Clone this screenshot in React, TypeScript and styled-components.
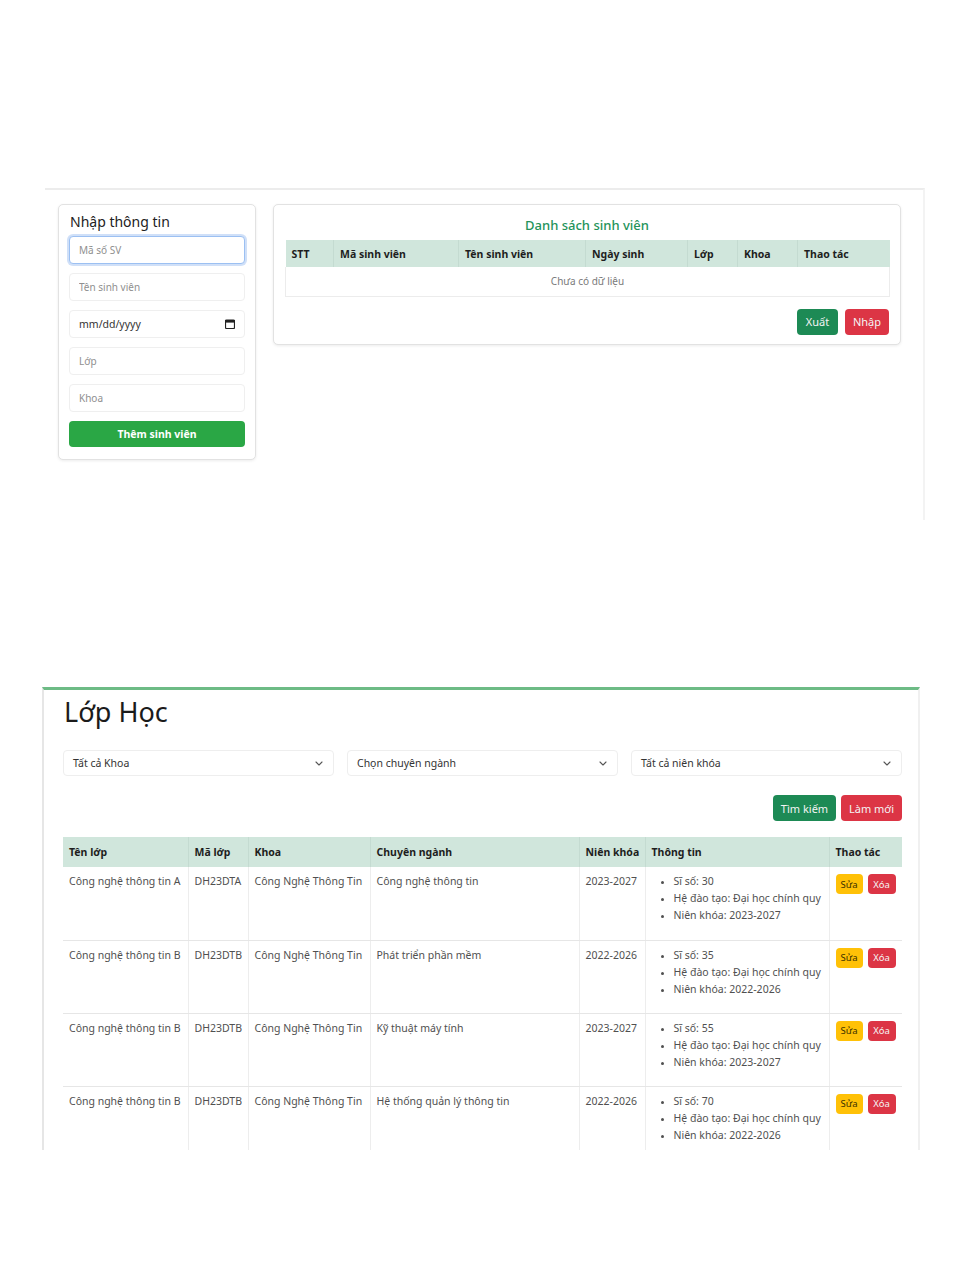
import React from "react";
import styled, { createGlobalStyle } from "styled-components";

const Global = createGlobalStyle`
  html, body { margin: 0; padding: 0; background: #ffffff; }
  body { font-family: "Noto Sans", "Open Sans", Arial, sans-serif; color: #333; }
  * { box-sizing: border-box; }
`;

const Page = styled.div`
  width: 971px;
  height: 1280px;
  padding-top: 188px;
  display: flex;
  flex-direction: column;
`;

const ShotOne = styled.section`
  margin-left: 45px;
  width: 880px;
  height: 332px;
  border-top: 2px solid #ececec;
  border-right: 2px solid #f3f3f3;
  padding: 14px 0 0 13px;
  display: flex;
  align-items: flex-start;
  gap: 17px;
`;

const Card = styled.div<{ $w: number }>`
  width: ${(p) => p.$w}px;
  background: #fff;
  border: 1px solid #e2e2e2;
  border-radius: 5px;
  box-shadow: 0 1px 3px rgba(0, 0, 0, 0.08);
`;

const FormCard = styled(Card)`
  padding: 7px 11px 12px 10px;
  display: flex;
  flex-direction: column;
  gap: 9px;
`;

const FormTitle = styled.h3`
  margin: 0 0 -5px 1px;
  font-size: 14px;
  line-height: 20px;
  font-weight: 400;
  color: #222;
`;

const Input = styled.input<{ $focused?: boolean }>`
  width: 176px;
  height: 28px;
  border: 1px solid ${(p) => (p.$focused ? "#9cc0f2" : "#efefef")};
  box-shadow: ${(p) => (p.$focused ? "0 0 0 2px rgba(120,165,235,0.35)" : "none")};
  border-radius: 4px;
  padding: 0 9px;
  font: inherit;
  font-size: 10px;
  color: #333;
  outline: none;
  &::placeholder { color: #8f8f8f; }
`;

const DateField = styled.div`
  width: 176px;
  height: 28px;
  border: 1px solid #efefef;
  border-radius: 4px;
  padding: 0 9px;
  display: flex;
  align-items: center;
  justify-content: space-between;
  font-size: 10.5px;
  color: #333;
`;

const AddButton = styled.button`
  width: 176px;
  height: 26px;
  border: none;
  border-radius: 4px;
  background: #2aa745;
  color: #fff;
  font: inherit;
  font-size: 10.5px;
  font-weight: 700;
`;

const TableCard = styled(Card)`
  padding: 10px 11px 9px 11px;
  display: flex;
  flex-direction: column;
`;

const ListTitle = styled.h3`
  margin: 0 0 5px;
  text-align: center;
  font-size: 13px;
  line-height: 20px;
  font-weight: 500;
  color: #23935a;
`;

const Table = styled.table<{ $w: number }>`
  width: ${(p) => p.$w}px;
  border-collapse: collapse;
  table-layout: fixed;
  font-size: 10.5px;
`;

const Th = styled.th<{ $w: number; $h: number }>`
  width: ${(p) => p.$w}px;
  height: ${(p) => p.$h}px;
  background: #d0e6dc;
  text-align: left;
  padding: 0 6px;
  font-weight: 700;
  color: #1e1e1e;
  white-space: nowrap;
  border-left: 1px solid #c4dbd1;
  &:first-child { border-left: none; }
`;

const EmptyCell = styled.td`
  height: 29px;
  text-align: center;
  color: #7a7a7a;
  font-size: 10px;
  border: 1px solid #ececec;
  border-top: none;
`;

const ButtonRow = styled.div<{ $mt: number; $gap: number }>`
  display: flex;
  justify-content: flex-end;
  gap: ${(p) => p.$gap}px;
  margin-top: ${(p) => p.$mt}px;
`;

const Btn = styled.button<{ $kind: "green" | "red" | "yellow"; $w: number; $h: number }>`
  width: ${(p) => p.$w}px;
  height: ${(p) => p.$h}px;
  border: none;
  border-radius: 4px;
  padding: 0;
  font: inherit;
  font-size: ${(p) => (p.$h < 24 ? "9.5px" : "11px")};
  background: ${(p) => (p.$kind === "green" ? "#1d8a55" : p.$kind === "red" ? "#dc3545" : "#ffc107")};
  color: ${(p) => (p.$kind === "yellow" ? "#3a3000" : "#f4f4f4")};
`;

const ShotTwo = styled.section`
  margin-top: 167px;
  margin-left: 42px;
  width: 878px;
  height: 463px;
  overflow: hidden;
  border-top: 3px solid #6dbb85;
  border-left: 2px solid #e6e6e6;
  border-right: 2px solid #f0f0f0;
  padding: 0 16px 0 19px;
`;

const PageTitle = styled.h1`
  margin: 4px 0 20px 1px;
  font-size: 27px;
  line-height: 36px;
  font-weight: 400;
  color: #1b1b1b;
`;

const Filters = styled.div`
  display: grid;
  grid-template-columns: repeat(3, 271px);
  column-gap: 13px;
`;

const Select = styled.div`
  height: 26px;
  border: 1px solid #eeeeee;
  border-radius: 4px;
  padding: 0 10px 0 9px;
  display: flex;
  align-items: center;
  justify-content: space-between;
  font-size: 10.5px;
  color: #333;
`;

const ClassTable = styled(Table)`
  margin-top: 16px;
`;

const Td = styled.td`
  height: 73px;
  vertical-align: top;
  padding: 6px 6px;
  color: #505050;
  line-height: 17px;
  border-left: 1px solid #ededed;
  border-bottom: 1px solid #e6e6e6;
  white-space: nowrap;
  &:first-child { border-left: none; }
`;

const InfoList = styled.ul`
  margin: 0;
  padding-left: 22px;
  list-style: disc;
  li::marker { font-size: 9px; }
`;

const Actions = styled.div`
  display: flex;
  gap: 5px;
  margin-top: 1px;
`;

const Chevron = () => (
  <svg width="8" height="5" viewBox="0 0 8 5" fill="none">
    <path d="M1 1l3 3l3-3" stroke="#555" strokeWidth="1.1" strokeLinecap="round" strokeLinejoin="round" />
  </svg>
);

const CalendarIcon = () => (
  <svg width="10" height="10" viewBox="0 0 10 10">
    <rect x="0.5" y="1" width="9" height="8.5" rx="1" fill="none" stroke="#222" strokeWidth="1.2" />
    <rect x="0.5" y="1" width="9" height="2.6" fill="#222" />
  </svg>
);

const studentCols: [string, number][] = [
  ["STT", 48],
  ["Mã sinh viên", 125],
  ["Tên sinh viên", 127],
  ["Ngày sinh", 102],
  ["Lớp", 50],
  ["Khoa", 60],
  ["Thao tác", 92],
];

const classCols: [string, number][] = [
  ["Tên lớp", 125],
  ["Mã lớp", 60],
  ["Khoa", 122],
  ["Chuyên ngành", 209],
  ["Niên khóa", 66],
  ["Thông tin", 184],
  ["Thao tác", 73],
];

const classes = [
  { name: "Công nghệ thông tin A", code: "DH23DTA", major: "Công nghệ thông tin", year: "2023-2027", size: 30 },
  { name: "Công nghệ thông tin B", code: "DH23DTB", major: "Phát triển phần mềm", year: "2022-2026", size: 35 },
  { name: "Công nghệ thông tin B", code: "DH23DTB", major: "Kỹ thuật máy tính", year: "2023-2027", size: 55 },
  { name: "Công nghệ thông tin B", code: "DH23DTB", major: "Hệ thống quản lý thông tin", year: "2022-2026", size: 70 },
];

export default function App() {
  return (
    <Page>
      <Global />
      <ShotOne>
        <FormCard $w={198}>
          <FormTitle>Nhập thông tin</FormTitle>
          <Input $focused placeholder="Mã số SV" readOnly />
          <Input placeholder="Tên sinh viên" readOnly />
          <DateField>
            <span>mm/dd/yyyy</span>
            <CalendarIcon />
          </DateField>
          <Input placeholder="Lớp" readOnly />
          <Input placeholder="Khoa" readOnly />
          <AddButton>Thêm sinh viên</AddButton>
        </FormCard>
        <TableCard $w={628}>
          <ListTitle>Danh sách sinh viên</ListTitle>
          <Table $w={604}>
            <thead>
              <tr>
                {studentCols.map(([t, w]) => (
                  <Th key={t} $w={w} $h={27}>{t}</Th>
                ))}
              </tr>
            </thead>
            <tbody>
              <tr>
                <EmptyCell colSpan={7}>Chưa có dữ liệu</EmptyCell>
              </tr>
            </tbody>
          </Table>
          <ButtonRow $mt={12} $gap={7}>
            <Btn $kind="green" $w={41} $h={26}>Xuất</Btn>
            <Btn $kind="red" $w={44} $h={26}>Nhập</Btn>
          </ButtonRow>
        </TableCard>
      </ShotOne>

      <ShotTwo>
        <PageTitle>Lớp Học</PageTitle>
        <Filters>
          <Select><span>Tất cả Khoa</span><Chevron /></Select>
          <Select><span>Chọn chuyên ngành</span><Chevron /></Select>
          <Select><span>Tất cả niên khóa</span><Chevron /></Select>
        </Filters>
        <ButtonRow $mt={19} $gap={5}>
          <Btn $kind="green" $w={63} $h={26}>Tìm kiếm</Btn>
          <Btn $kind="red" $w={61} $h={26}>Làm mới</Btn>
        </ButtonRow>
        <ClassTable $w={839}>
          <thead>
            <tr>
              {classCols.map(([t, w]) => (
                <Th key={t} $w={w} $h={30}>{t}</Th>
              ))}
            </tr>
          </thead>
          <tbody>
            {classes.map((c, i) => (
              <tr key={i}>
                <Td>{c.name}</Td>
                <Td>{c.code}</Td>
                <Td>Công Nghệ Thông Tin</Td>
                <Td>{c.major}</Td>
                <Td>{c.year}</Td>
                <Td>
                  <InfoList>
                    <li>Sĩ số: {c.size}</li>
                    <li>Hệ đào tạo: Đại học chính quy</li>
                    <li>Niên khóa: {c.year}</li>
                  </InfoList>
                </Td>
                <Td>
                  <Actions>
                    <Btn $kind="yellow" $w={27} $h={20}>Sửa</Btn>
                    <Btn $kind="red" $w={28} $h={20}>Xóa</Btn>
                  </Actions>
                </Td>
              </tr>
            ))}
          </tbody>
        </ClassTable>
      </ShotTwo>
    </Page>
  );
}
